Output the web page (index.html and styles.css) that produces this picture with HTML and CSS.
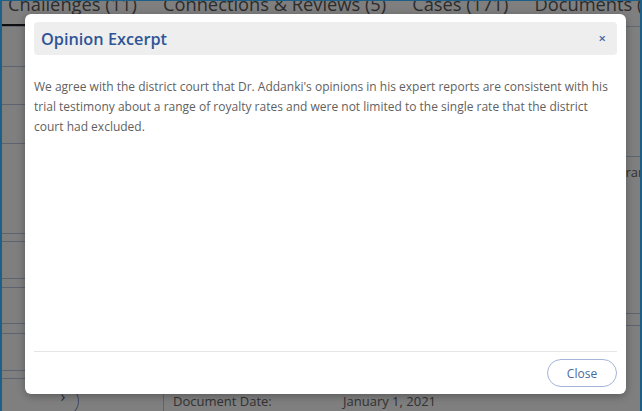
FILE: index.html
```
<!DOCTYPE html>
<html lang="en">
<head>
<meta charset="utf-8">
<title>Opinion Excerpt</title>
<link rel="stylesheet" href="styles.css">
</head>
<body>
<div class="page">
  <nav class="tabs">
    <span class="tab active">Challenges (11)</span>
    <span class="tab">Connections &amp; Reviews (5)</span>
    <span class="tab">Cases (171)</span>
    <span class="tab">Documents (12)</span>
  </nav>
  <div class="content">
    <div class="list-left">
      <div class="row r39"></div>
      <div class="row r37"></div>
      <div class="row r38"></div>
      <div class="row r89"></div>
      <div class="row r7"></div>
      <div class="row r36"></div>
      <div class="row r8"></div>
      <div class="row r35"></div>
      <div class="row r9"></div>
      <div class="row r36"></div>
      <div class="row r7"></div>
      <div class="doc-row">
        <span class="circle-btn">&#x203A;</span>
        <div class="doc-detail">
          <span class="doc-label">Document Date:</span>
          <span class="doc-value">January 1, 2021</span>
        </div>
      </div>
    </div>
    <div class="list-right">
      <div class="row r129"></div>
      <div class="row r156"><span class="status">Granted</span></div>
      <div class="row r11"></div>
    </div>
  </div>

  <div class="backdrop"></div>
  <div class="frame"></div>

  <div class="modal" role="dialog" aria-labelledby="modal-title">
    <header class="modal-header">
      <h2 class="modal-title" id="modal-title">Opinion Excerpt</h2>
      <span class="modal-close">&times;</span>
    </header>
    <div class="modal-body">
      <p>We agree with the district court that Dr. Addanki's opinions in his expert reports are consistent with his trial testimony about a range of royalty rates and were not limited to the single rate that the district court had excluded.</p>
    </div>
    <footer class="modal-footer">
      <button class="btn-close" type="button">Close</button>
    </footer>
  </div>
</div>
</body>
</html>
```
FILE: styles.css
```
html, body {
  margin: 0;
  padding: 0;
}
body {
  font-family: "Open Sans", "Noto Sans", sans-serif;
  background: #fff;
}
.page {
  position: relative;
  width: 642px;
  height: 411px;
  overflow: hidden;
  background: #fff;
}

/* background page */
.tabs {
  display: flex;
  margin-top: -8px;
  border-bottom: 1px solid #c4cfe2;
  font-size: 18.3px;
  line-height: 24px;
  color: #585858;
}
.tab {
  padding: 0 13px 8px;
  border-bottom: 2px solid transparent;
  white-space: nowrap;
}
.tab.active {
  padding-left: 6px;
  margin-left: 2px;
  border-bottom-color: #1e1e1e;
}
.content {
  display: flex;
}
.list-left {
  width: 300px;
  flex: none;
}
.list-right {
  flex: 1;
}
.row {
  border-bottom: 1px solid #bac8e0;
}
.r7 { height: 7px; }
.r8 { height: 8px; }
.r9 { height: 9px; }
.r11 { height: 11px; }
.r35 { height: 35px; }
.r36 { height: 36px; }
.r37 { height: 37px; }
.r38 { height: 38px; }
.r39 { height: 39px; }
.r89 { height: 89px; }
.r129 { height: 129px; }
.r156 { height: 156px; }
.status {
  display: block;
  padding: 5px 0 0 316px;
  font-size: 13px;
  line-height: 20px;
  color: #666;
  white-space: nowrap;
}
.doc-row {
  display: flex;
  align-items: flex-start;
}
.circle-btn {
  flex: none;
  width: 32px;
  height: 32px;
  margin: 6px 0 0 47px;
  border: 1px solid #8296c8;
  border-left-color: transparent;
  border-radius: 50%;
  box-sizing: border-box;
  display: flex;
  align-items: center;
  justify-content: center;
  font-size: 16px;
  line-height: 1;
  padding-bottom: 10px;
  color: #4a5e90;
}
.doc-detail {
  display: grid;
  grid-template-columns: 170px auto;
  margin: 12px 0 0 84px;
  padding: 0 0 0 9px;
  border-left: 1px solid #bac8e0;
  font-size: 13px;
  line-height: 20px;
  color: #666;
  white-space: nowrap;
  height: 40px;
}

/* overlay */
.backdrop {
  position: absolute;
  inset: 0;
  background: rgba(0, 0, 0, 0.5);
}
.frame {
  position: absolute;
  inset: 0;
  border-left: 2px solid #1d5f87;
  border-right: 2px solid #1d5f87;
  border-top: 1px solid #1d5f87;
  pointer-events: none;
}

/* modal */
.modal {
  position: absolute;
  left: 25px;
  top: 14px;
  width: 601px;
  height: 380px;
  box-sizing: border-box;
  padding: 8px 9px 7px;
  background: #fff;
  border-radius: 6px;
  box-shadow: 0 2px 8px rgba(0, 0, 0, 0.3);
  display: flex;
  flex-direction: column;
}
.modal-header {
  flex: none;
  height: 33px;
  display: flex;
  align-items: center;
  justify-content: space-between;
  padding: 0 11px 0 7px;
  background: #eeeeee;
  border-radius: 4px;
}
.modal-title {
  margin: 0;
  font-size: 16.3px;
  font-weight: 600;
  line-height: 24px;
  color: #2f5597;
}
.modal-close {
  font-size: 13px;
  font-weight: 600;
  line-height: 1;
  color: #4063a0;
}
.modal-body {
  flex: 1;
  padding-top: 22px;
  font-size: 12px;
  line-height: 20px;
  color: #5f5f5f;
}
.modal-body p {
  margin: 0;
}
.modal-footer {
  flex: none;
  display: flex;
  justify-content: flex-end;
  padding-top: 7px;
  border-top: 1px solid #e6e6e6;
}
.btn-close {
  width: 70px;
  height: 28px;
  padding: 0;
  border: 1px solid #a3b5d9;
  border-radius: 14px;
  background: #fff;
  font-family: inherit;
  font-size: 12px;
  color: #4a68a0;
}
```
